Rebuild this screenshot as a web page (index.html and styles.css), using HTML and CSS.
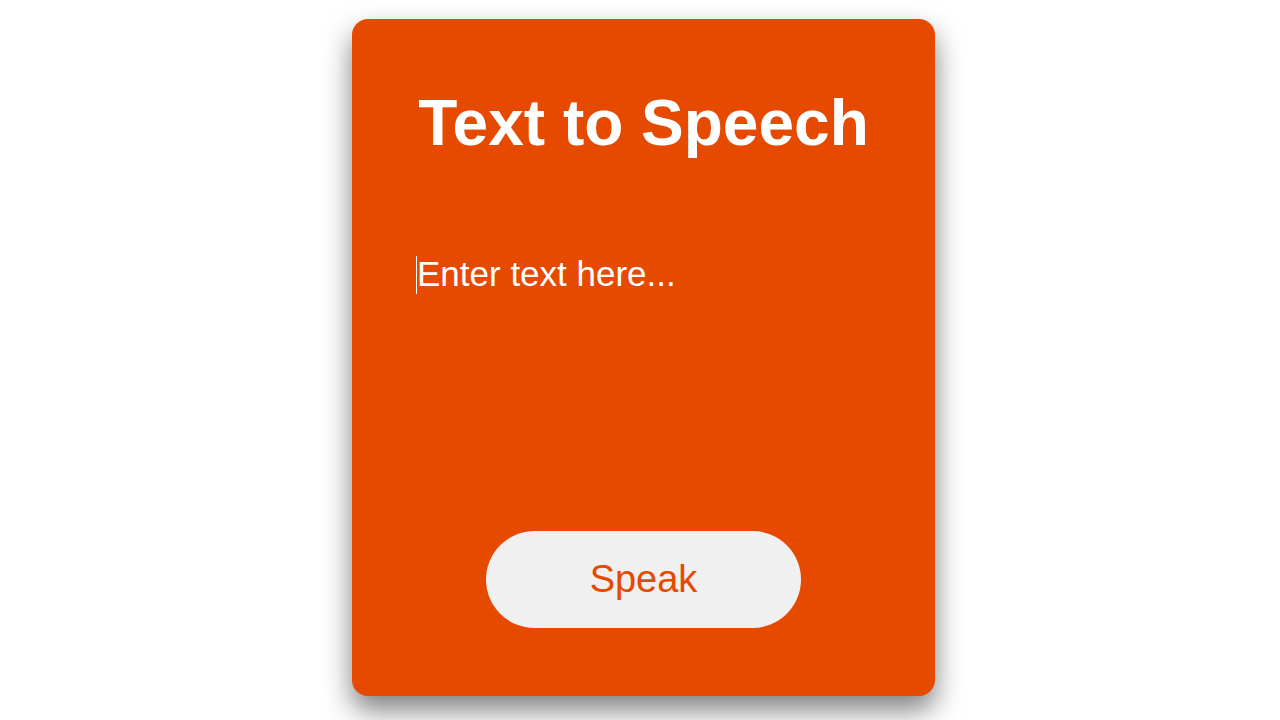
FILE: index.html
```html
<!DOCTYPE html>
<html>
<head>
<meta charset="utf-8">
<link rel="stylesheet" href="styles.css">
</head>
<body>
<div class="page">
  <div class="card">
    <h1 class="title">Text to Speech</h1>
    <div class="field">
      <span class="caret"></span>
      <textarea class="input" placeholder="Enter text here..."></textarea>
    </div>
    <button class="speak">Speak</button>
  </div>
</div>
</body>
</html>
```
FILE: styles.css
```css
html, body {
  margin: 0;
  padding: 0;
  background: #ffffff;
  font-family: "Liberation Sans", Arial, sans-serif;
}
.page {
  display: flex;
  justify-content: center;
  padding: 19px 0 0 7px;
  height: 720px;
  box-sizing: border-box;
}
.card {
  width: 583px;
  height: 677px;
  box-sizing: border-box;
  background: #e64a00;
  border-radius: 16px;
  box-shadow: 0 14px 28px rgba(0, 0, 0, 0.5);
  display: flex;
  flex-direction: column;
  align-items: center;
  padding: 66px 64px 0;
}
.title {
  margin: 0;
  color: #ffffff;
  font-size: 64px;
  font-weight: bold;
  line-height: 76px;
}
.field {
  position: relative;
  margin-top: 93px;
  align-self: stretch;
  height: 230px;
}
.caret {
  position: absolute;
  left: 0;
  top: 2px;
  width: 1px;
  height: 38px;
  background: #ffffff;
}
.input {
  display: block;
  width: 100%;
  height: 100%;
  box-sizing: border-box;
  background: transparent;
  border: none;
  outline: none;
  resize: none;
  padding: 0 0 0 1px;
  margin: 0;
  color: #ffffff;
  font-family: "Liberation Sans", Arial, sans-serif;
  font-size: 35px;
  line-height: 40px;
  caret-color: #ffffff;
}
.input::placeholder {
  color: #ffffff;
  opacity: 1;
}
.speak {
  margin-top: 47px;
  width: 315px;
  height: 97px;
  border: none;
  border-radius: 49px;
  background: #f0f0f0;
  color: #e64a00;
  font-family: "Liberation Sans", Arial, sans-serif;
  font-size: 38px;
  cursor: pointer;
}
```
